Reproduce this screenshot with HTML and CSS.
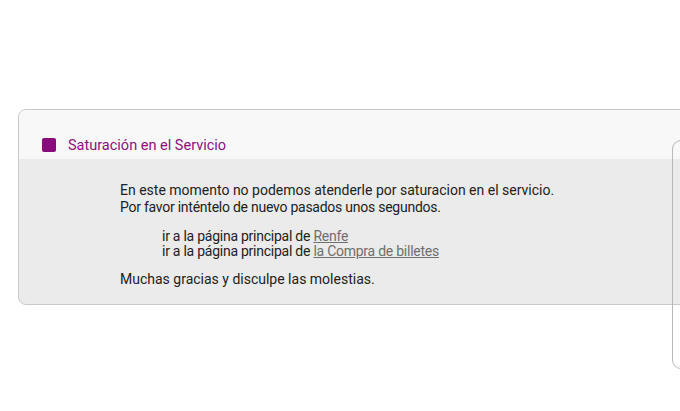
FILE: index.html
```html
<!DOCTYPE html>
<html lang="es">
<head>
<meta charset="utf-8">
<title>Saturación en el Servicio</title>
<link rel="stylesheet" href="styles.css">
</head>
<body>
<div class="page">
  <div class="card">
    <div class="card-head">
      <span class="square"></span>
      <h1 class="title">Saturación en el Servicio</h1>
    </div>
    <div class="card-body">
      <p class="msg"><span class="line">En este momento no podemos atenderle por saturacion en el servicio.</span><span class="line tight">Por favor inténtelo de nuevo pasados unos segundos.</span></p>
      <ul class="links">
        <li>ir a la página principal de <a href="#">Renfe</a></li>
        <li>ir a la página principal de <a href="#">la Compra de billetes</a></li>
      </ul>
      <p class="msg">Muchas gracias y disculpe las molestias.</p>
    </div>
  </div>
  <div class="side-panel"></div>
</div>
</body>
</html>
```
FILE: styles.css
```css
html, body {
  margin: 0;
  padding: 0;
  background: #ffffff;
  overflow: hidden;
}
body {
  font-family: Roboto, "Liberation Sans", sans-serif;
  color: #222222;
  width: 680px;
  height: 411px;
}
.page {
  position: relative;
  padding-top: 109px;
  padding-left: 18px;
}
.card {
  width: 720px;
  border: 1px solid #c9c9c9;
  border-radius: 8px;
  overflow: hidden;
  background: #ebebeb;
}
.card-head {
  display: flex;
  align-items: center;
  box-sizing: border-box;
  height: 49px;
  padding-top: 21px;
  padding-left: 23px;
  background: #f8f8f8;
}
.square {
  width: 14px;
  height: 14px;
  border-radius: 2px;
  background: #8a0b7c;
  margin-right: 12px;
}
.title {
  margin: 0;
  font-size: 14.5px;
  font-weight: 400;
  line-height: 17px;
  color: #8a107f;
}
.card-body {
  padding: 23px 0 16px 101px;
  font-size: 14px;
  line-height: 17px;
}
.msg {
  margin: 0;
}
.line {
  display: block;
}
.tight {
  letter-spacing: -0.25px;
}
.links {
  list-style: none;
  margin: 13px 0 12px 0;
  padding-left: 42px;
  line-height: 15px;
  letter-spacing: -0.25px;
}
.links a {
  color: #6f6f6f;
  text-decoration: underline;
}
.side-panel {
  position: absolute;
  left: 672px;
  top: 140px;
  width: 40px;
  height: 227px;
  border: 1px solid #b8b8b8;
  border-radius: 9px;
}
```
